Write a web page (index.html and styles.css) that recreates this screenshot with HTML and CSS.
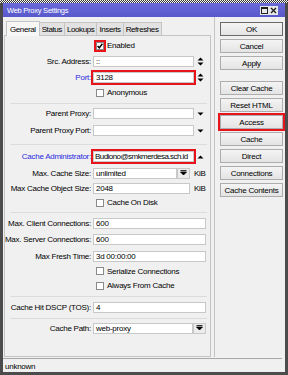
FILE: index.html
```html
<!DOCTYPE html>
<html lang="en">
<head>
  <meta charset="UTF-8" />
  <title>Web Proxy Settings</title>
  <link rel="stylesheet" href="styles.css">
</head>
<body>
  <div class="dots"></div>
  <div class="window">
    <div class="titlebar">
      <span class="title">Web Proxy Settings</span>
      <div class="winbtns">
        <span class="winbtn"><svg width="7" height="7" viewBox="0 0 7 7"><rect x="0.5" y="0.5" width="6" height="6" fill="none" stroke="#222"/><rect x="0.5" y="0.5" width="6" height="1.5" fill="#222"/></svg></span>
        <span class="winbtn"><svg width="7" height="7" viewBox="0 0 7 7"><path d="M1 1L6 6M6 1L1 6" stroke="#222" stroke-width="1.4"/></svg></span>
      </div>
    </div>

    <div class="body">
      <div class="main">
        <div class="tabs">
          <span class="tab active">General</span>
          <span class="tab">Status</span>
          <span class="tab">Lookups</span>
          <span class="tab">Inserts</span>
          <span class="tab">Refreshes</span>
        </div>

        <div class="panel">
          <div class="row check h15">
            <span class="label"></span>
            <span class="box checked marked"><svg width="6" height="6" viewBox="0 0 6 6"><path d="M0.6 3L2.3 4.8L5.4 0.8" fill="none" stroke="#000" stroke-width="1.4"/></svg></span>
            <span>Enabled</span>
          </div>
          <div class="row h16">
            <span class="label">Src. Address:</span>
            <span class="field w101">::</span>
            <span class="arrow"><svg width="7" height="9" viewBox="0 0 7 9"><path d="M3.5 0.5L6.5 3.5H0.5Z M0.5 5.5H6.5L3.5 8.5Z" fill="#000"/></svg></span>
          </div>
          <div class="row h16">
            <span class="label blue">Port:</span>
            <span class="field w101 marked">3128</span>
            <span class="arrow"><svg width="7" height="9" viewBox="0 0 7 9"><path d="M3.5 0.5L6.5 3.5H0.5Z M0.5 5.5H6.5L3.5 8.5Z" fill="#000"/></svg></span>
          </div>
          <div class="row check h15">
            <span class="label"></span>
            <span class="box"></span>
            <span>Anonymous</span>
          </div>
          <div class="sep h5"></div>
          <div class="row h17">
            <span class="label">Parent Proxy:</span>
            <span class="field w101"></span>
            <span class="arrow"><svg width="7" height="4" viewBox="0 0 7 4"><path d="M0.5 0.5H6.5L3.5 3.5Z" fill="#000"/></svg></span>
          </div>
          <div class="row h17">
            <span class="label">Parent Proxy Port:</span>
            <span class="field w101"></span>
            <span class="arrow"><svg width="7" height="4" viewBox="0 0 7 4"><path d="M0.5 0.5H6.5L3.5 3.5Z" fill="#000"/></svg></span>
          </div>
          <div class="sep h9"></div>
          <div class="row h17">
            <span class="label blue">Cache Administrator:</span>
            <span class="field w101 marked tight">Budiono@smkmerdesa.sch.id</span>
            <span class="arrow"><svg width="7" height="4" viewBox="0 0 7 4"><path d="M3.5 0.5L6.5 3.5H0.5Z" fill="#000"/></svg></span>
          </div>
          <div class="row h16">
            <span class="label">Max. Cache Size:</span>
            <span class="field w84">unlimited</span>
            <span class="drop"><svg width="7" height="6" viewBox="0 0 7 6"><path d="M0.5 0.5H6.5M0.5 2H6.5L3.5 5Z" fill="#000" stroke="#000" stroke-width="0.8"/></svg></span>
            <span class="unit">KiB</span>
          </div>
          <div class="row h15">
            <span class="label">Max Cache Object Size:</span>
            <span class="field w97">2048</span>
            <span class="unit">KiB</span>
          </div>
          <div class="row check h13">
            <span class="label"></span>
            <span class="box"></span>
            <span>Cache On Disk</span>
          </div>
          <div class="sep h6"></div>
          <div class="row h16">
            <span class="label">Max. Client Connections:</span>
            <span class="field w113">600</span>
          </div>
          <div class="row h17">
            <span class="label">Max. Server Connections:</span>
            <span class="field w113">600</span>
          </div>
          <div class="row h16">
            <span class="label">Max Fresh Time:</span>
            <span class="field w113">3d 00:00:00</span>
          </div>
          <div class="row check h14">
            <span class="label"></span>
            <span class="box"></span>
            <span>Serialize Connections</span>
          </div>
          <div class="row check h15">
            <span class="label"></span>
            <span class="box"></span>
            <span>Always From Cache</span>
          </div>
          <div class="sep h6"></div>
          <div class="row h16">
            <span class="label">Cache Hit DSCP (TOS):</span>
            <span class="field w113">4</span>
          </div>
          <div class="sep h5"></div>
          <div class="row h16">
            <span class="label">Cache Path:</span>
            <span class="field w100">web-proxy</span>
            <span class="drop"><svg width="7" height="6" viewBox="0 0 7 6"><path d="M0.5 0.5H6.5M0.5 2H6.5L3.5 5Z" fill="#000" stroke="#000" stroke-width="0.8"/></svg></span>
          </div>
        </div>
      </div>

      <div class="side">
        <button class="btn default">OK</button>
        <button class="btn">Cancel</button>
        <button class="btn">Apply</button>
        <button class="btn gap">Clear Cache</button>
        <button class="btn">Reset HTML</button>
        <button class="btn marked">Access</button>
        <button class="btn">Cache</button>
        <button class="btn">Direct</button>
        <button class="btn">Connections</button>
        <button class="btn">Cache Contents</button>
      </div>
    </div>

    <div class="statusbar">unknown</div>
  </div>
</body>
</html>
```

FILE: styles.css
```css
/* Page */
body {
  margin: 0;
  background: #fff;
  font-family: "Liberation Sans", Arial, sans-serif;
  font-size: 8px;
  letter-spacing: -0.25px;
  color: #000;
}
/* Checkered selection edge along the top */
.dots {
  height: 3px;
  background-color: #fff;
  background-image:
    linear-gradient(45deg, #333 25%, transparent 25%, transparent 75%, #333 75%),
    linear-gradient(45deg, #333 25%, transparent 25%, transparent 75%, #333 75%);
  background-size: 2px 2px;
  background-position: 0 0, 1px 1px;
}
/* Window frame */
.window {
  width: 288px;
  height: 372px;
  box-sizing: border-box;
  border: 3px solid #4c4c4c;
  border-top: 0;
  background: #f0f0f0;
  display: flex;
  flex-direction: column;
}
.titlebar {
  height: 14px;
  flex: none;
  background: linear-gradient(#6a6ad8, #5858cc);
  color: #fff;
  font-size: 7.5px;
  display: flex;
  align-items: center;
  padding-left: 4px;
  padding-right: 7px;
}
.title {
  flex: 1;
}
.winbtns {
  display: flex;
}
.winbtn {
  width: 9px;
  height: 9px;
  background: #e6e6e6;
  display: flex;
  align-items: center;
  justify-content: center;
}
/* Body: tabbed panel + button column */
.body {
  flex: 1;
  display: flex;
}
.main {
  width: 209px;
  padding-top: 3px;
  display: flex;
  flex-direction: column;
}
.tabs {
  display: flex;
  align-items: flex-end;
  height: 15px;
  margin-left: 3px;
  letter-spacing: -0.4px;
}
.tab {
  height: 12px;
  padding: 0 2px;
  background: #e2e2e2;
  border: 1px solid #c4c4c4;
  border-bottom: 0;
  margin-left: -1px;
  display: flex;
  align-items: center;
}
.tab.active {
  height: 14px;
  background: #f7f7f7;
  margin-left: 0;
  padding: 0 3px;
  position: relative;
  z-index: 1;
  margin-bottom: -1px;
}
.panel {
  margin-left: 1px;
  width: 207px;
  height: 322px;
  box-sizing: border-box;
  border: 1px solid #c4c4c4;
  padding-top: 2px;
  background: #f0f0f0;
}
.row {
  display: flex;
  align-items: center;
}
.h13 { height: 13px; }
.h14 { height: 14px; }
.h15 { height: 15px; }
.h16 { height: 16px; }
.h17 { height: 17px; }
.label {
  width: 86px;
  flex: none;
  margin-right: 2px;
  white-space: nowrap;
  display: flex;
  justify-content: flex-end;
}
.blue {
  color: #2a2ae0;
}
.field {
  height: 11px;
  box-sizing: border-box;
  border: 1px solid #c8c8c8;
  background: #fff;
  padding-left: 2px;
  display: flex;
  align-items: center;
  white-space: nowrap;
  overflow: hidden;
  flex: none;
}
.tight {
  letter-spacing: -0.55px;
  padding-left: 1px;
}
.w84 { width: 84px; }
.w97 { width: 97px; }
.w100 { width: 100px; }
.w101 { width: 101px; }
.w113 { width: 113px; }
.arrow {
  width: 12px;
  display: flex;
  justify-content: center;
}
.drop {
  width: 13px;
  height: 11px;
  box-sizing: border-box;
  border: 1px solid #c8c8c8;
  background: #ececec;
  display: flex;
  align-items: center;
  justify-content: center;
}
.unit {
  margin-left: 4px;
}
.check .label {
  width: 89px;
}
.box {
  width: 8px;
  height: 8px;
  box-sizing: border-box;
  border: 1px solid #8a8a8a;
  background: #fff;
  margin-right: 3px;
  display: flex;
  align-items: center;
  justify-content: center;
}
/* Red annotation boxes from the screenshot */
.marked {
  outline: 2px solid #e8141c;
}
.sep {
  margin: 0 3px 0 5px;
  position: relative;
}
.sep::after {
  content: '';
  position: absolute;
  left: 0;
  right: 0;
  top: 50%;
  border-top: 1px solid #dcdcdc;
}
.h5 { height: 5px; }
.h6 { height: 6px; }
.h9 { height: 9px; }
/* Right-hand buttons */
.side {
  flex: 1;
  border-left: 1px solid #c4c4c4;
  margin-left: 2px;
  padding: 5px 0 0 5px;
  display: flex;
  flex-direction: column;
  gap: 3px;
}
.btn {
  width: 63px;
  height: 14px;
  padding: 0;
  border: 1px solid #adadad;
  background: linear-gradient(#f4f4f4, #e4e4e4);
  font-family: inherit;
  font-size: 8px;
  letter-spacing: -0.25px;
  color: #000;
}
.btn.default {
  border-color: #6a6a6a;
}
.btn.gap {
  margin-top: 8px;
}
.statusbar {
  height: 15px;
  flex: none;
  box-sizing: border-box;
  width: 279px;
  border-top: 1px solid #a8a8a8;
  margin-top: 1px;
  padding-left: 2px;
  display: flex;
  align-items: center;
}
```
